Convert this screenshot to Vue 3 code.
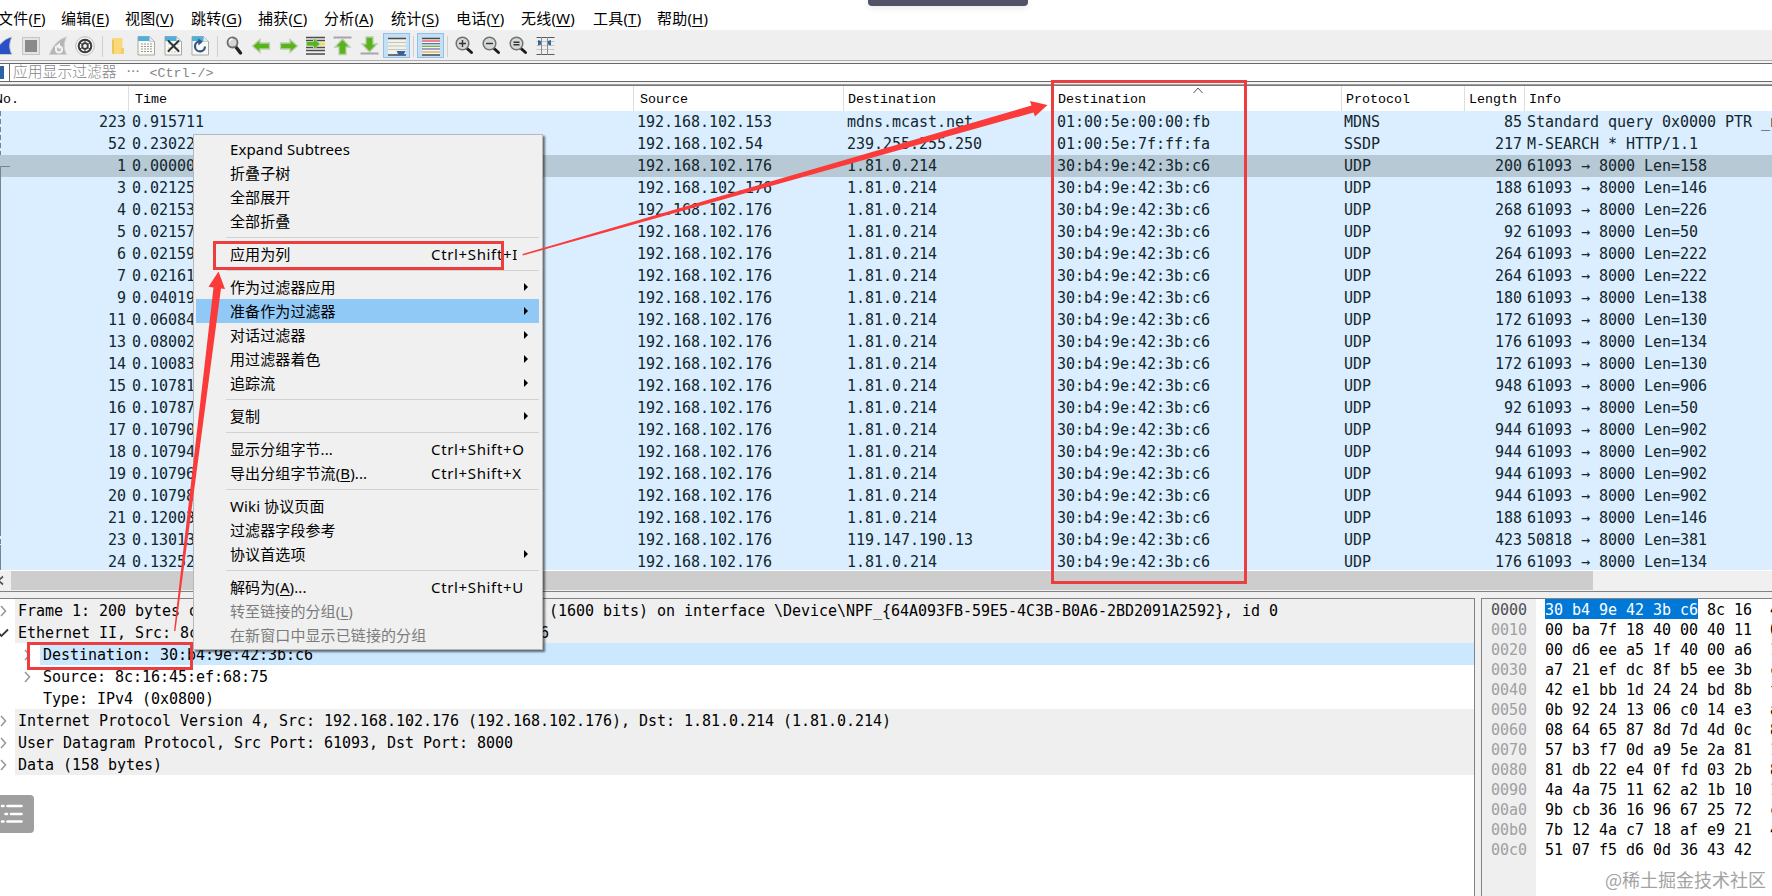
<template>
  <div class="window">
    <nav class="menubar">
      <span v-for="m in menus" :key="m.key">{{ m.text }}(<u>{{ m.key }}</u>)</span>
    </nav>

    <div class="toolbar">
      <svg class="tool" viewBox="0 0 27 25">
        <path d="M2 21.500C7 12 14 5 21 4c-3 6-3 12 0 17.500z" fill="#2a50c8" stroke="#c9c9c9" />
      </svg>
      <svg class="tool" viewBox="0 0 27 25">
        <rect x="4.500" y="4.500" width="17" height="17" fill="#e4e4e4" stroke="#c4c4c4" />
        <rect x="7" y="7" width="12" height="12" fill="#8a8a8a" />
      </svg>
      <svg class="tool" viewBox="0 0 27 25">
        <path d="M4.500 21.500C8 12 14 6 21.500 4c-3 6-3 12 0 17.500z" fill="#b5b5b5" stroke="#d0d0d0" />
        <path d="M11 13v3.500a3 3 0 0 0 6 0c0-2-1-3-3-3" fill="none" stroke="#f4f4f4" stroke-width="2" />
        <path d="M15 9.500v7l-4-3.500z" fill="#f4f4f4" />
      </svg>
      <svg class="tool" viewBox="0 0 27 25">
        <circle cx="13" cy="13" r="9.300" fill="#f7f7f7" stroke="#bbb" />
        <circle cx="13" cy="13" r="6.300" fill="none" stroke="#3b3b3b" stroke-width="2" />
        <circle cx="13" cy="13" r="2.800" fill="none" stroke="#3b3b3b" stroke-width="1.800" />
        <path d="M13 6v4M13 16v4M7 9.500l3.500 2M15.500 14.500l3.500 2M7 16.500l3.500-2M15.500 11.500l3.500-2" stroke="#3b3b3b" stroke-width="1" />
      </svg>
      <i class="sep"></i>
      <svg class="tool" viewBox="0 0 27 25">
        <path d="M6.500 5h10v10h1.500v6h-11.500z" fill="#fbd978" />
        <path d="M6 6l2 1v14.500l-2-1.500z" fill="#edc35c" />
        <path d="M15 15h3v6h-3z" fill="#f2cd6a" />
      </svg>
      <svg class="tool" viewBox="0 0 27 25">
        <path d="M5 3.500h11.500l5 5v13.500h-16.500z" fill="#fafaf4" stroke="#a9a9a4" />
        <path d="M5 3.500h11.500v4.500h-11.500z" fill="#4db0dc" />
        <path d="M16.500 3.500v5h5z" fill="#e3eff5" stroke="#9fb5bf" stroke-width=".6" />
        <path d="M8 11h11M8 13.500h11M8 16h11M8 18.500h11" stroke="#9a9a94" stroke-dasharray="2 1" />
      </svg>
      <svg class="tool" viewBox="0 0 27 25">
        <path d="M5 3.500h11.500l5 5v13.500h-16.500z" fill="#fafaf4" stroke="#a9a9a4" />
        <path d="M5 3.500h11.500v4.500h-11.500z" fill="#4db0dc" />
        <path d="M16.500 3.500v5h5z" fill="#e3eff5" stroke="#9fb5bf" stroke-width=".6" />
        <path d="M8 11h11M8 15h11M8 19h11" stroke="#c5c5be" stroke-dasharray="2 1" />
        <path d="M8.500 8l10 10M18.500 8l-10 10" stroke="#2f3135" stroke-width="2" stroke-linecap="round" />
      </svg>
      <svg class="tool" viewBox="0 0 27 25">
        <path d="M5 3.500h11.500l5 5v13.500h-16.500z" fill="#fafaf4" stroke="#a9a9a4" />
        <path d="M5 3.500h11.500v4.500h-11.500z" fill="#4db0dc" />
        <path d="M16.500 3.500v5h5z" fill="#e3eff5" stroke="#9fb5bf" stroke-width=".6" />
        <path d="M12 8.500a5 5 0 1 0 6 5" fill="none" stroke="#36538f" stroke-width="2.200" />
        <path d="M11 5.500l5 3-4.500 4z" fill="#36538f" />
      </svg>
      <i class="sep"></i>
      <svg class="tool" viewBox="0 0 27 25">
        <path d="M14.500 13.500l5 6.500" stroke="#222" stroke-width="3.400" stroke-linecap="round" />
        <circle cx="11.500" cy="9.500" r="5" fill="#d3d6d6" stroke="#6c6c6c" stroke-width="1.800" />
        <path d="M8.500 9a3 3 0 0 1 3-3" fill="none" stroke="#fff" stroke-width="1.300" />
      </svg>
      <svg class="tool" viewBox="0 0 27 25">
        <path d="M4.500 13l7.500-6.500v3.500h9.500v6h-9.500v3.500z" fill="#58b31c" stroke="#b9cfab" stroke-width="1.300" />
      </svg>
      <svg class="tool" viewBox="0 0 27 25">
        <path d="M22.500 13l-7.500-6.500v3.500h-9.500v6h9.500v3.500z" fill="#58b31c" stroke="#b9cfab" stroke-width="1.300" />
      </svg>
      <svg class="tool" viewBox="0 0 27 25">
        <path d="M4 4.500h19M4 7.500h19M4 14.500h19M4 17.500h19M4 21h19" stroke="#4b4b4b" stroke-width="1.300" />
        <path d="M15 11h8" stroke="#f3dc59" stroke-width="3" />
        <path d="M4.500 8.500h7v-3.500l6.500 6-6.500 5.500v-3.500h-7z" fill="#58b31c" stroke="#b9cfab" />
      </svg>
      <svg class="tool" viewBox="0 0 27 25">
        <path d="M4.500 4.500h18" stroke="#a6a6a6" stroke-width="2" />
        <path d="M13.500 6l7.500 8h-4v7.500h-7v-7.500h-4z" fill="#58b31c" stroke="#b9cfab" stroke-width="1.300" />
      </svg>
      <svg class="tool" viewBox="0 0 27 25">
        <path d="M4.500 20.500h18" stroke="#a6a6a6" stroke-width="2" />
        <path d="M13.500 19l7.500-8h-4v-7h-7v7h-4z" fill="#58b31c" stroke="#b9cfab" stroke-width="1.300" />
      </svg>
      <svg class="tool pressed" viewBox="0 0 27 25">
        <path d="M5 5.500h18v16h-18z" fill="#f1f2ec" />
        <path d="M5 5.500h18M5 22h18" stroke="#4a4a4a" stroke-width="1.300" />
        <path d="M5 9.500h18M5 13h18M5 16.500h18" stroke="#c4c4b8" />
        <path d="M13.500 18h9l-2 4h-5z" fill="#3163a8" />
      </svg>
      <i class="sep"></i>
      <svg class="tool pressed" viewBox="0 0 27 25">
        <path d="M5 5.500h18v16h-18z" fill="#f4f4f0" />
        <path d="M5 5.500h18M5 22h18" stroke="#4a4a4a" stroke-width="1.300" />
        <path d="M5 8h18" stroke="#e24e50" stroke-width="1.300" />
        <path d="M5 10.700h18" stroke="#5470b5" stroke-width="1.300" />
        <path d="M5 13.300h18" stroke="#69ad52" stroke-width="1.300" />
        <path d="M5 16h18" stroke="#7470b9" stroke-width="1.300" />
        <path d="M5 19h18" stroke="#d3b04c" stroke-width="1.300" />
      </svg>
      <i class="sep"></i>
      <svg v-for="z in zooms" :key="z.name" class="tool" viewBox="0 0 27 25">
        <path d="M15.500 15l5 4.500" stroke="#1c1c1c" stroke-width="3" stroke-linecap="round" />
        <circle cx="11.500" cy="10.500" r="6.300" fill="#d5d8d8" stroke="#727272" stroke-width="1.500" />
        <path :d="z.path" stroke="#333" stroke-width="1.400" />
      </svg>
      <svg class="tool" viewBox="0 0 27 25">
        <path d="M4.500 4.500h18M4.500 21.500h18" stroke="#5a5a5a" />
        <path d="M4.500 8.500h18M4.500 12.500h18M4.500 16.500h18" stroke="#c7c7bd" />
        <path d="M9.500 4v18M15.500 4v18" stroke="#8b8b8b" />
        <path d="M6 7l3 1v3.500l-3 1zM19 7l-3 1v3.500l3 1z" fill="#3467a8" />
      </svg>
    </div>

    <div class="filter">
      <i class="bookmark"></i>
      <div class="filter-input">
        <span class="zh">应用显示过滤器</span><span class="dots">⋯</span><span class="hint">&lt;Ctrl-/&gt;</span>
      </div>
    </div>

    <section class="packets">
      <div class="grid head">
        <span class="no">No.</span>
        <span>Time</span>
        <span>Source</span>
        <span>Destination</span>
        <span class="sorted">Destination
          <svg viewBox="0 0 10 7"><path d="M.5 6L5 1l4.500 5" fill="none" stroke="#555" /></svg>
        </span>
        <span>Protocol</span>
        <span class="len">Length</span>
        <span>Info</span>
      </div>
      <div class="rows">
        <div v-for="p in packets" :key="p[0]" class="grid row" :class="{ selected: p[0] === 1 }">
          <span class="num">{{ p[0] }}</span>
          <span>{{ p[1] }}</span>
          <span>{{ p[2] }}</span>
          <span>{{ p[3] }}</span>
          <span>{{ p[4] }}</span>
          <span>{{ p[5] }}</span>
          <span class="num">{{ p[6] }}</span>
          <span class="info">{{ p[7] }}</span>
        </div>
        <svg class="related" viewBox="0 0 12 459">
          <path d="M.5 0v44M.5 420v14" stroke="#76848d" stroke-dasharray="5 3" />
          <path d="M10 55.500h-9.500V420M.5 434v25" fill="none" stroke="#76848d" />
        </svg>
      </div>
      <div class="scrollbar">
        <svg viewBox="0 0 11 19"><path d="M3 5.500l-4.500 4 4.500 4" fill="none" stroke="#555" stroke-width="1.800" /></svg>
        <div class="thumb"></div>
      </div>
    </section>

    <div class="bottom">
      <section class="details">
        <div v-for="d in details" :key="d.text" class="detail" :class="[d.type, { child: d.child }]">
          <svg class="twisty" viewBox="0 0 12 12">
            <path v-if="d.arrow === 'open'" d="M1 5l3.500 4L11 2.500" fill="none" stroke="#333" stroke-width="1.800" />
            <path v-else-if="d.arrow" d="M4 1l4.500 5L4 11" fill="none" stroke="#9a9a9a" stroke-width="1.600" />
          </svg>
          <span>{{ d.text }}</span>
        </div>
      </section>
      <section class="hex">
        <div class="offsets">
          <div v-for="(h, i) in hexRows" :key="i" :class="{ current: i === 0 }">{{ h[0] }}</div>
        </div>
        <div class="bytes">
          <div v-for="(h, i) in hexRows" :key="i" class="line">
            <span><mark v-if="h[3]">{{ h[3] }}</mark>{{ h[1] }}</span>
            <span>{{ h[2] }}</span>
          </div>
        </div>
      </section>
    </div>

    <div class="context">
      <template v-for="(c, i) in contextItems" :key="i">
        <hr v-if="!c" />
        <div v-else class="item" :class="{ hover: c.hover, disabled: c.disabled }">
          <span class="label">{{ c.label }}<template v-if="c.key">(<u>{{ c.key }}</u>)</template>{{ c.tail }}</span>
          <span v-if="c.shortcut" class="shortcut">{{ c.shortcut }}</span>
          <i v-if="c.sub" class="sub"></i>
        </div>
      </template>
    </div>

    <div class="box box-menu"></div>
    <div class="box box-column"></div>
    <div class="box box-field"></div>
    <svg class="arrows" viewBox="0 0 1772 896">
      <path d="M522.500 253.900L1031.500 105.500L1030 101L1047.500 105L1035 116.500L1033.500 112.500L522.800 255.400z" />
      <path d="M174 631L213.500 287.500L208.500 286.800L218.500 271.500L225 289L221 288.500L175.400 631z" />
    </svg>

    <div class="pill"></div>
    <div class="outline-btn">
      <svg viewBox="0 0 34 38">
        <path d="M7.500 11h14M11 19h10.500M7.500 26.500h14M2 11h1.500M5.500 19h1.500M2 26.500h1.500" stroke="#fff" stroke-width="2.600" stroke-linecap="round" />
      </svg>
    </div>
    <div class="watermark">@稀土掘金技术社区</div>
  </div>
</template>

<script setup>
const menus = [
  { text: '文件', key: 'F' },
  { text: '编辑', key: 'E' },
  { text: '视图', key: 'V' },
  { text: '跳转', key: 'G' },
  { text: '捕获', key: 'C' },
  { text: '分析', key: 'A' },
  { text: '统计', key: 'S' },
  { text: '电话', key: 'Y' },
  { text: '无线', key: 'W' },
  { text: '工具', key: 'T' },
  { text: '帮助', key: 'H' }
];

const zooms = [
  { name: 'in', path: 'M8 10.500h7M11.500 7v7' },
  { name: 'out', path: 'M8 10.500h7' },
  { name: 'reset', path: 'M8.500 9.300h6M8.500 11.800h6' }
];

const mac = '30:b4:9e:42:3b:c6';
const udp = (no, time, length, len) => [
  no, time, '192.168.102.176', '1.81.0.214', mac, 'UDP', length, `61093 → 8000 Len=${len}`
];

const packets = [
  [223, '0.915711', '192.168.102.153', 'mdns.mcast.net', '01:00:5e:00:00:fb', 'MDNS', 85, 'Standard query 0x0000 PTR _n'],
  [52, '0.23022', '192.168.102.54', '239.255.255.250', '01:00:5e:7f:ff:fa', 'SSDP', 217, 'M-SEARCH * HTTP/1.1'],
  udp(1, '0.00000', 200, 158),
  udp(3, '0.02125', 188, 146),
  udp(4, '0.02153', 268, 226),
  udp(5, '0.02157', 92, 50),
  udp(6, '0.02159', 264, 222),
  udp(7, '0.02161', 264, 222),
  udp(9, '0.04019', 180, 138),
  udp(11, '0.06084', 172, 130),
  udp(13, '0.08002', 176, 134),
  udp(14, '0.10083', 172, 130),
  udp(15, '0.10781', 948, 906),
  udp(16, '0.10787', 92, 50),
  udp(17, '0.10790', 944, 902),
  udp(18, '0.10794', 944, 902),
  udp(19, '0.10796', 944, 902),
  udp(20, '0.10798', 944, 902),
  udp(21, '0.12003', 188, 146),
  [23, '0.13013', '192.168.102.176', '119.147.190.13', mac, 'UDP', 423, '50818 → 8000 Len=381'],
  udp(24, '0.13252', 176, 134)
];

const details = [
  { text: 'Frame 1: 200 bytes on wire (1600 bits), 200 bytes captured (1600 bits) on interface \\Device\\NPF_{64A093FB-59E5-4C3B-B0A6-2BD2091A2592}, id 0', type: 'gray', arrow: 'closed' },
  { text: 'Ethernet II, Src: 8c:16:45:ef:68:75, Dst: 30:b4:9e:42:3b:c6', type: 'gray', arrow: 'open' },
  { text: 'Destination: 30:b4:9e:42:3b:c6', type: 'blue', child: true, arrow: 'closed' },
  { text: 'Source: 8c:16:45:ef:68:75', child: true, arrow: 'closed' },
  { text: 'Type: IPv4 (0x0800)', child: true },
  { text: 'Internet Protocol Version 4, Src: 192.168.102.176 (192.168.102.176), Dst: 1.81.0.214 (1.81.0.214)', type: 'gray', arrow: 'closed' },
  { text: 'User Datagram Protocol, Src Port: 61093, Dst Port: 8000', type: 'gray', arrow: 'closed' },
  { text: 'Data (158 bytes)', type: 'gray', arrow: 'closed' }
];

// offset, bytes, first digit of the second half, highlighted bytes
const hexRows = [
  ['0000', ' 8c 16', '4', '30 b4 9e 42 3b c6'],
  ['0010', '00 ba 7f 18 40 00 40 11', '0'],
  ['0020', '00 d6 ee a5 1f 40 00 a6', '1'],
  ['0030', 'a7 21 ef dc 8f b5 ee 3b', 'c'],
  ['0040', '42 e1 bb 1d 24 24 bd 8b', 'f'],
  ['0050', '0b 92 24 13 06 c0 14 e3', 'a'],
  ['0060', '08 64 65 87 8d 7d 4d 0c', '8'],
  ['0070', '57 b3 f7 0d a9 5e 2a 81', '1'],
  ['0080', '81 db 22 e4 0f fd 03 2b', '8'],
  ['0090', '4a 4a 75 11 62 a2 1b 10', '1'],
  ['00a0', '9b cb 36 16 96 67 25 72', 'c'],
  ['00b0', '7b 12 4a c7 18 af e9 21', '4'],
  ['00c0', '51 07 f5 d6 0d 36 43 42', '']
];

// null is a separator
const contextItems = [
  { label: 'Expand Subtrees' },
  { label: '折叠子树' },
  { label: '全部展开' },
  { label: '全部折叠' },
  null,
  { label: '应用为列', shortcut: 'Ctrl+Shift+I' },
  null,
  { label: '作为过滤器应用', sub: true },
  { label: '准备作为过滤器', sub: true, hover: true },
  { label: '对话过滤器', sub: true },
  { label: '用过滤器着色', sub: true },
  { label: '追踪流', sub: true },
  null,
  { label: '复制', sub: true },
  null,
  { label: '显示分组字节...', shortcut: 'Ctrl+Shift+O' },
  { label: '导出分组字节流', key: 'B', tail: '...', shortcut: 'Ctrl+Shift+X' },
  null,
  { label: 'Wiki 协议页面' },
  { label: '过滤器字段参考' },
  { label: '协议首选项', sub: true },
  null,
  { label: '解码为', key: 'A', tail: '...', shortcut: 'Ctrl+Shift+U' },
  { label: '转至链接的分组', key: 'L', disabled: true },
  { label: '在新窗口中显示已链接的分组', disabled: true }
];
</script>

<style>
body {
  margin: 0;
  overflow: hidden;
}
</style>

<style scoped>
.window {
  position: relative;
  display: flex;
  flex-direction: column;
  width: 1772px;
  height: 896px;
  overflow: hidden;
  background: #fff;
  color: #000;
  font-family: "Noto Sans", "Noto Sans CJK SC", sans-serif;
  font-size: 15px;
  white-space: pre;
}

.window * {
  box-sizing: border-box;
}

.menubar {
  display: grid;
  grid-template-columns: 63px 64px 66px 67px 66px 67px 65px 65px 72px 64px 60px;
  height: 31px;
  margin-left: -2px;
  padding-top: 6px;
  line-height: 24px;
  letter-spacing: 0.2px;
  border-bottom: 1px solid #f0f0f0;
}

.menubar u, .label u {
  text-underline-offset: 2px;
}

.toolbar {
  display: flex;
  height: 30px;
  padding-top: 2px;
  background: #efefef;
  border-bottom: 1px solid #b0b0b0;
}

.tool {
  flex: none;
  width: 27px;
  height: 25px;
}

.tool:first-child {
  margin-left: -9px;
}

.tool.pressed {
  background: #c5dff5;
  outline: 1px solid #90c0e8;
  outline-offset: -1px;
}

.sep {
  width: 1px;
  height: 21px;
  margin: 3px 3px 0;
  background: #cfcfcf;
}

.filter {
  display: flex;
  height: 24px;
  padding-top: 2px;
  border-bottom: 1px solid #a0a0a0;
  background: #f3f3f3;
}

.bookmark {
  width: 9px;
  height: 19px;
  border: solid #696969;
  border-width: 1px 0;
  background: linear-gradient(#2d63a5, #2d63a5) 0 2px / 4px 13px no-repeat #fff;
}

.filter-input {
  display: flex;
  flex: 1;
  height: 19px;
  padding-left: 3px;
  border: 1px solid #696969;
  border-right: 0;
  background: #fff;
  color: #868686;
  font: 13.33px/18px "Liberation Mono", "Noto Sans CJK SC", monospace;
}

.filter-input .zh {
  font-size: 14.8px;
  font-weight: 300;
}

.filter-input .dots {
  width: 33px;
  text-align: center;
}

.filter-input .hint {
  line-height: 19px;
}

.packets {
  height: 507px;
  border-top: 1px solid #777;
  border-bottom: 1px solid #828282;
}

.grid {
  display: grid;
  grid-template-columns: 128px 505px 210px 210px 288px 123px 60px 248px;
}

.head {
  height: 25px;
  font: 13.33px/28px "Liberation Mono", monospace;
}

.head span {
  padding-left: 6px;
  border-left: 1px solid #dedede;
}

.head .no {
  padding-left: 0;
  border-left: 0;
  text-indent: -5px;
}

.head .len {
  padding-left: 4px;
}

.head span:nth-child(n + 4) {
  padding-left: 4px;
}

.head .sorted {
  position: relative;
}

.sorted svg {
  position: absolute;
  top: 1px;
  left: 139px;
  width: 10px;
  height: 7px;
}

.rows {
  position: relative;
  height: 459px;
  overflow: hidden;
  background: #daeeff;
}

.row {
  height: 22px;
  color: #12272e;
  font: 15px/22px "DejaVu Sans Mono", monospace;
  letter-spacing: -0.03px;
}

.row span {
  padding-left: 4px;
  overflow: hidden;
}

.row span:nth-child(6), .row .info {
  padding-left: 3px;
}

.row .num {
  padding: 0 2px 0 0;
  text-align: right;
}

.row.selected {
  background: #b7c9d5;
}

.related {
  position: absolute;
  top: 0;
  left: 0;
  width: 12px;
  height: 459px;
}

.scrollbar {
  display: flex;
  height: 20px;
  margin-top: 1px;
  background: #f0f0f0;
}

.scrollbar svg {
  width: 11px;
  height: 19px;
}

.thumb {
  width: 1582px;
  height: 19px;
  background: #cdcdcd;
}

.bottom {
  display: flex;
  flex: 1;
  gap: 6px;
  padding-top: 6px;
  background: #f0f0f0;
}

.details {
  width: 1475px;
  border-top: 1px solid #828282;
  border-right: 1px solid #828282;
  background: #fff;
  font: 15px/24px "DejaVu Sans Mono", monospace;
  letter-spacing: -0.03px;
}

.detail {
  display: flex;
  height: 22px;
}

.twisty {
  flex: none;
  width: 12px;
  height: 12px;
  margin: 6px 6px 0 -3px;
}

.child .twisty {
  margin-left: 21px;
  margin-right: 7px;
}

.detail span {
  flex: 1;
  padding-left: 3px;
  overflow: hidden;
}

.gray span {
  background: #efefef;
}

.blue span {
  background: #cce8ff;
}

.hex {
  display: flex;
  flex: 1;
  border-top: 1px solid #828282;
  border-left: 1px solid #828282;
  background: #fff;
  overflow: hidden;
  font: 15px/22px "DejaVu Sans Mono", monospace;
  letter-spacing: -0.03px;
}

.offsets {
  flex: none;
  width: 54px;
  padding-left: 9px;
  background: #efefef;
  color: #a0a0a0;
}

.offsets div {
  height: 20px;
}

.offsets .current {
  color: #505050;
}

.bytes {
  padding-left: 9px;
}

.line {
  display: flex;
  gap: 18px;
  height: 20px;
}

.bytes mark {
  display: inline-block;
  height: 20px;
  background: #0078d7;
  color: #fff;
}

.context {
  position: absolute;
  top: 134px;
  left: 193px;
  width: 350px;
  height: 516px;
  padding: 2px 3px 2px 2px;
  border: 1px solid #b8b8b8;
  background: #f0f0f0;
  box-shadow: 2px 2px 2px rgba(0, 0, 0, 0.55);
}

.context hr {
  height: 1px;
  margin: 4px 0 4px 30px;
  border: 0;
  background: #d2d2d2;
}

.item {
  display: flex;
  align-items: center;
  height: 24px;
  padding-left: 34px;
  line-height: 24px;
}

.label {
  width: 201px;
  letter-spacing: 0.1px;
}

.shortcut {
  width: 106px;
  letter-spacing: 0.65px;
}

.item.hover {
  background: #90c8f6;
}

.item.disabled {
  color: #7c7c7c;
}

.sub {
  margin-left: 93px;
  border: solid transparent;
  border-width: 4px 0 4px 4px;
  border-left-color: #000;
}

.box {
  position: absolute;
  border: 3px solid #ec3e3e;
}

.box-menu {
  top: 241px;
  left: 213px;
  width: 291px;
  height: 29px;
}

.box-column {
  top: 80px;
  left: 1051px;
  width: 196px;
  height: 504px;
}

.box-field {
  top: 642px;
  left: 27px;
  width: 166px;
  height: 28px;
}

.arrows {
  position: absolute;
  top: 0;
  left: 0;
  width: 1772px;
  height: 896px;
  fill: #fb3b39;
}

.pill {
  position: absolute;
  top: 0;
  left: 868px;
  width: 160px;
  height: 6px;
  border-radius: 0 0 4px 4px;
  background: #515268;
  box-shadow: 0 2px 6px rgba(0, 0, 0, 0.1);
}

.outline-btn {
  position: absolute;
  top: 795px;
  left: 0;
  width: 34px;
  height: 38px;
  border-radius: 0 4px 4px 0;
  background: #a09f9f;
}

.watermark {
  position: absolute;
  right: 6px;
  bottom: 4px;
  color: #a3a3a3;
  font: 18px/26px "Noto Sans CJK SC", sans-serif;
}
</style>
